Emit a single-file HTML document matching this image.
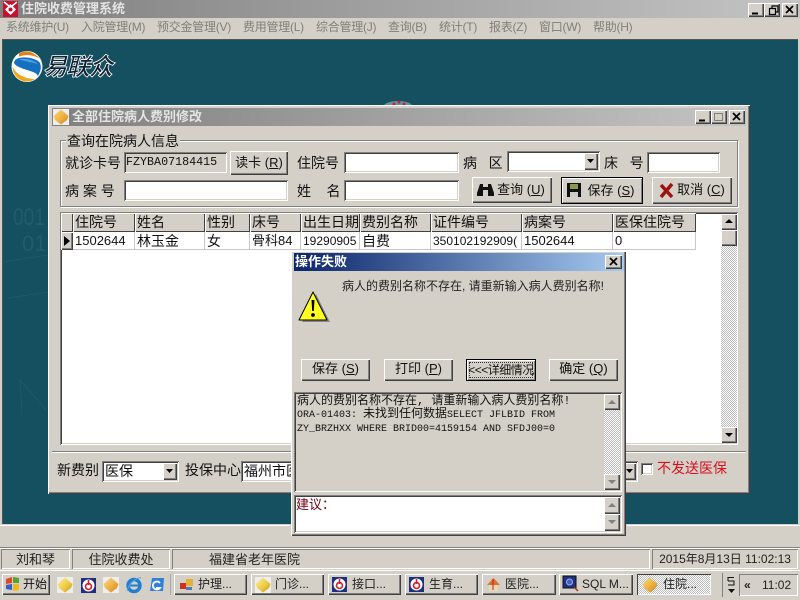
<!DOCTYPE html>
<html><head><meta charset="utf-8">
<style>
html,body{margin:0;padding:0;width:800px;height:600px;overflow:hidden;background:#d4d0c8}
body{position:relative;font-family:"Liberation Sans","WenQuanYi Zen Hei","Noto Sans CJK SC",sans-serif;font-size:14px;color:#111}
div,span{position:absolute;box-sizing:border-box;white-space:nowrap}
.r{background:#d4d0c8;box-shadow:inset 1px 1px 0 #fff,inset -1px -1px 0 #404040,inset -2px -2px 0 #808080,inset 2px 2px 0 #d4d0c8;text-align:center}
.bk{background:#d4d0c8;border:1px solid #000;box-shadow:inset 1px 1px 0 #fff,inset -1px -1px 0 #808080;text-align:center}
.s{background:#fff;box-shadow:inset 1px 1px 0 #808080,inset -1px -1px 0 #fff,inset 2px 2px 0 #404040,inset -2px -2px 0 #d4d0c8}
.p{box-shadow:inset 1px 1px 0 #808080,inset -1px -1px 0 #fff;text-align:center;font-size:13px;line-height:21px;color:#222}
.t{line-height:16px}
.m{font-size:12px;color:#807f7b;top:20px;line-height:15px;letter-spacing:-.25px}
.h{background:#d4d0c8;box-shadow:inset 1px 1px 0 #fff,inset -1px -1px 0 #404040;top:213px;height:19px;line-height:18px;padding-left:2px;font-size:14px;overflow:hidden}
.c{top:232px;height:18px;line-height:18px;padding-left:2px;font-size:13px;background:#fff;border-right:1px solid #c8c8c8;border-bottom:1px solid #c8c8c8;overflow:hidden}
.mono{font-family:"Liberation Mono","WenQuanYi Zen Hei",monospace}
.tb{top:574px;height:21px;line-height:20px;font-size:12px;text-align:left;padding-left:24px;color:#222}
.dither{background-image:linear-gradient(45deg,#bbb 25%,transparent 25%,transparent 75%,#bbb 75%),linear-gradient(45deg,#bbb 25%,#fff 25%,#fff 75%,#bbb 75%);background-size:2px 2px;background-position:0 0,1px 1px}
svg{position:absolute;overflow:visible}
</style></head><body>

<svg width="0" height="0" style="left:0;top:0"><defs>
<linearGradient id="g" x1="0" y1="0" x2="1" y2="1"><stop offset="0" stop-color="#f8dc80"/><stop offset=".55" stop-color="#eeb040"/><stop offset="1" stop-color="#c88020"/></linearGradient>
<linearGradient id="y" x1="0" y1="0" x2="1" y2="1"><stop offset="0" stop-color="#fff0a0"/><stop offset=".6" stop-color="#ecc840"/><stop offset="1" stop-color="#b89020"/></linearGradient>
</defs></svg>

<!-- main title -->
<div style="left:0;top:0;width:800px;height:18px;background:linear-gradient(90deg,#808080,#c4c4c4)"></div>
<svg style="left:3px;top:1px" width="15" height="16" viewBox="0 0 15 16"><rect width="15" height="16" fill="#c8102e"/><path d="M7.5 3 L13 8.5 L7.5 14 L2 8.5Z" fill="#fff"/><circle cx="7.5" cy="8.5" r="2" fill="#c8102e"/><path d="M1 1 L6 5 M14 1 L9 5" stroke="#fff" stroke-width="1.5"/></svg>
<div style="left:21px;top:1px;font-size:13px;font-weight:bold;color:#e4e4e4;line-height:16px">住院收费管理系统</div>
<div class="r" style="left:748px;top:3px;width:16px;height:14px"></div>
<div class="r" style="left:764px;top:3px;width:16px;height:14px"></div>
<div class="r" style="left:782px;top:3px;width:16px;height:14px"></div>
<svg style="left:748px;top:3px" width="50" height="14"><path d="M4 10.5h6" stroke="#000" stroke-width="2"/><path d="M21.5 5.5h6v6h-6zM24 5V3h6v6h-2" fill="none" stroke="#000" stroke-width="1.2"/><path d="M38 3l7 7M45 3l-7 7" stroke="#000" stroke-width="1.7"/></svg>

<!-- menu -->
<div style="left:0;top:18px;width:800px;height:20px;background:#d4d0c8"></div>
<span class="m" style="left:6px">系统维护(U)</span>
<span class="m" style="left:81px">入院管理(M)</span>
<span class="m" style="left:157px">预交金管理(V)</span>
<span class="m" style="left:243px">费用管理(L)</span>
<span class="m" style="left:316px">综合管理(J)</span>
<span class="m" style="left:388px">查询(B)</span>
<span class="m" style="left:439px">统计(T)</span>
<span class="m" style="left:489px">报表(Z)</span>
<span class="m" style="left:539px">窗口(W)</span>
<span class="m" style="left:593px">帮助(H)</span>

<!-- MDI -->
<div style="left:0;top:38px;width:800px;height:488px;background:#d4d0c8"></div>
<div style="left:2px;top:39px;width:796px;height:485px;background:#14505f;box-shadow:inset 1px 1px 0 #555"></div>
<div style="left:13px;top:205px;font-size:24px;color:#1f5d6c;font-family:'Liberation Sans';line-height:26px;transform:scaleX(.8);transform-origin:0 0">001</div>
<div style="left:22px;top:232px;font-size:22px;color:#1f5d6c;line-height:24px">01</div>
<svg style="left:0;top:250px" width="50" height="170"><path d="M2 12L48 5M8 48L48 42M20 130L22 165M20 130L46 160" stroke="#1c5a69" stroke-width="1" fill="none"/></svg>
<svg style="left:380px;top:98px" width="36" height="8"><ellipse cx="18" cy="8" rx="14" ry="5" fill="#6b9298"/><circle cx="14" cy="6" r="1.5" fill="#c02040"/><circle cx="19" cy="4" r="1.5" fill="#c02040"/><circle cx="24" cy="6" r="1.5" fill="#c02040"/></svg>

<!-- logo -->
<svg style="left:11px;top:50px" width="32" height="33" viewBox="0 0 32 33"><circle cx="16" cy="16.5" r="15.5" fill="#fff"/><path d="M7 7A14.5 14.5 0 0 1 29 9C22 4 13 4.500 7 7Z" fill="#e8801a"/><path d="M8 3.500A14 14 0 0 1 22 3L25 6C19 3.500 13 4 8 6Z" fill="#e8801a"/><path d="M1.500 17A14.500 14.500 0 0 0 24 29C18 29 7 27 1.500 17Z" fill="#f0a818"/><path d="M1.800 20C5 27 15 29 23 29A14 14 0 0 1 7 28Z" fill="#f0a818"/><path d="M3 13C3 10 6 8 11 7.500C18 7 26 9 29 13C31 18 29 22 27 26C25 20 7 20 3 13Z" fill="#1670c0"/><path d="M8 9C14 8 23 10 27 14C20 12 12 11 8 9Z" fill="#4aa4e8"/></svg>
<div style="left:43px;top:53px;font-size:24px;line-height:30px;font-style:italic;font-weight:bold;color:#123;-webkit-text-stroke:.8px #fff;letter-spacing:-1px">易联众</div>

<!-- child window -->
<div class="r" style="left:48px;top:105px;width:702px;height:389px"></div>
<div style="left:52px;top:108px;width:694px;height:18px;background:linear-gradient(90deg,#808080,#c4c4c4)"></div>
<svg style="left:53px;top:109px" width="16" height="16" viewBox="0 0 16 16"><rect width="16" height="16" fill="#eee"/><path d="M8 .5L15.500 7L14 11L8 15.500L2 11L.5 7Z" fill="url(#g)"/></svg>
<div style="left:72px;top:109px;font-size:13px;font-weight:bold;color:#e4e4e4;line-height:16px">全部住院病人费别修改</div>
<div class="r" style="left:695px;top:110px;width:16px;height:14px"></div>
<div class="r" style="left:711px;top:110px;width:16px;height:14px"></div>
<div class="r" style="left:729px;top:110px;width:16px;height:14px"></div>
<svg style="left:695px;top:110px" width="50" height="14"><path d="M4 10.5h6" stroke="#000" stroke-width="2"/><path d="M19.5 3.5h8v7h-8z" fill="none" stroke="#808080"/><path d="M38 3l7 7M45 3l-7 7" stroke="#000" stroke-width="1.7"/></svg>

<!-- group -->
<div style="left:60px;top:140px;width:678px;height:67px;border:1px solid #808080;box-shadow:1px 1px 0 #fff,inset 1px 1px 0 #fff"></div>
<div class="t" style="left:66px;top:133px;background:#d4d0c8;padding:0 1px">查询在院病人信息</div>
<div class="t" style="left:65px;top:155px">就诊卡号</div>
<div class="s mono" style="left:124px;top:152px;width:103px;height:21px;background:#d4d0c8;font-size:11.7px;line-height:21px;padding-left:2px">FZYBA07184415</div>
<div class="r" style="left:230px;top:151px;width:58px;height:24px;line-height:23px;font-size:13px">读卡 (<u>R</u>)</div>
<div class="t" style="left:297px;top:155px">住院号</div>
<div class="s" style="left:344px;top:152px;width:115px;height:21px"></div>
<div class="t" style="left:463px;top:155px">病&nbsp;&nbsp;&nbsp;区</div>
<div class="s" style="left:507px;top:151px;width:93px;height:21px"></div>
<div class="r" style="left:584px;top:153px;width:14px;height:17px"></div>
<svg style="left:587px;top:159px" width="8" height="5"><path d="M0 0h7L3.5 4Z" fill="#000"/></svg>
<div class="t" style="left:604px;top:155px">床&nbsp;&nbsp;&nbsp;号</div>
<div class="s" style="left:647px;top:152px;width:73px;height:21px"></div>
<div class="t" style="left:65px;top:183px">病&nbsp;案&nbsp;号</div>
<div class="s" style="left:124px;top:180px;width:164px;height:21px"></div>
<div class="t" style="left:297px;top:183px">姓&nbsp;&nbsp;&nbsp;&nbsp;名</div>
<div class="s" style="left:344px;top:180px;width:115px;height:21px"></div>
<div class="r" style="left:472px;top:177px;width:80px;height:26px;line-height:25px;font-size:13px;padding-left:18px">查询 (<u>U</u>)</div>
<svg style="left:477px;top:183px" width="17" height="14" viewBox="0 0 17 14"><path d="M3 1h3v3h5V1h3l3 9v3h-6V7H6v6H0v-3Z" fill="#111"/></svg>
<div class="bk" style="left:561px;top:177px;width:82px;height:27px;line-height:25px;font-size:13px;padding-left:18px">保存 (<u>S</u>)</div>
<svg style="left:567px;top:183px" width="14" height="14" viewBox="0 0 14 14"><path d="M0 0h14v14H0z" fill="#111"/><path d="M3 1h8v5H3z" fill="#8a9a50"/><path d="M3 9h8v5H3z" fill="#ccc"/></svg>
<div class="r" style="left:652px;top:177px;width:80px;height:27px;line-height:26px;font-size:13px;padding-left:18px">取消 (<u>C</u>)</div>
<svg style="left:659px;top:183px" width="15" height="15" viewBox="0 0 15 15"><path d="M2 2L13 14M13 1L2 14" stroke="#a01010" stroke-width="3.5"/></svg>

<!-- grid -->
<div class="s" style="left:60px;top:212px;width:678px;height:233px"></div>
<div class="h" style="left:61px;width:12px"></div>
<div class="h" style="left:73px;width:62px">住院号</div>
<div class="h" style="left:135px;width:70px">姓名</div>
<div class="h" style="left:205px;width:45px">性别</div>
<div class="h" style="left:250px;width:51px">床号</div>
<div class="h" style="left:301px;width:59px">出生日期</div>
<div class="h" style="left:360px;width:71px">费别名称</div>
<div class="h" style="left:431px;width:91px">证件编号</div>
<div class="h" style="left:522px;width:91px">病案号</div>
<div class="h" style="left:613px;width:83px">医保住院号</div>
<div class="r" style="left:61px;top:232px;width:12px;height:18px"></div>
<svg style="left:64px;top:236px" width="7" height="11"><path d="M0 0L6 5L0 10Z" fill="#000"/></svg>
<div class="c" style="left:73px;width:62px">1502644</div>
<div class="c" style="left:135px;width:70px;font-size:14px">林玉金</div>
<div class="c" style="left:205px;width:45px;font-size:14px">女</div>
<div class="c" style="left:250px;width:51px">骨科84</div>
<div class="c" style="left:301px;width:59px;font-size:12px">19290905</div>
<div class="c" style="left:360px;width:71px;font-size:14px">自费</div>
<div class="c" style="left:431px;width:91px;font-size:12px">350102192909(</div>
<div class="c" style="left:522px;width:91px">1502644</div>
<div class="c" style="left:613px;width:83px">0</div>
<div class="dither" style="left:721px;top:214px;width:16px;height:229px"></div>
<div class="r" style="left:721px;top:214px;width:16px;height:16px"></div>
<svg style="left:725px;top:219px" width="9" height="5"><path d="M4 0L8 4H0Z" fill="#000"/></svg>
<div class="r" style="left:721px;top:230px;width:16px;height:16px"></div>
<div class="r" style="left:721px;top:427px;width:16px;height:16px"></div>
<svg style="left:725px;top:433px" width="9" height="5"><path d="M0 0H8L4 4Z" fill="#000"/></svg>

<!-- bottom row -->
<div style="left:52px;top:451px;width:694px;height:2px;border-top:1px solid #808080;border-bottom:1px solid #fff"></div>
<div class="t" style="left:57px;top:462px">新费别</div>
<div class="s" style="left:102px;top:461px;width:77px;height:21px;line-height:21px;padding-left:3px">医保</div>
<div class="r" style="left:163px;top:463px;width:14px;height:17px"></div>
<svg style="left:166px;top:469px" width="8" height="5"><path d="M0 0h7L3.5 4Z" fill="#000"/></svg>
<div class="t" style="left:185px;top:462px">投保中心</div>
<div class="s" style="left:241px;top:461px;width:397px;height:21px;line-height:21px;padding-left:3px">福州市医保</div>
<div class="r" style="left:622px;top:463px;width:14px;height:17px"></div>
<svg style="left:626px;top:469px" width="8" height="5"><path d="M0 0h7L3.5 4Z" fill="#000"/></svg>
<div class="s" style="left:641px;top:463px;width:12px;height:12px"></div>
<div class="t" style="left:657px;top:460px;color:#d81020">不发送医保</div>

<!-- dialog -->
<div class="r" style="left:291px;top:251px;width:335px;height:285px"></div>
<div style="left:294px;top:253px;width:330px;height:18px;background:linear-gradient(90deg,#0a246a,#a6caf0)"></div>
<div style="left:295px;top:254px;font-size:13px;font-weight:bold;color:#fff;line-height:16px">操作失败</div>
<div class="r" style="left:605px;top:255px;width:17px;height:14px"></div>
<svg style="left:605px;top:255px" width="17" height="14"><path d="M5 3l7 7M12 3l-7 7" stroke="#000" stroke-width="1.7"/></svg>
<div style="left:342px;top:279px;font-size:12px;line-height:15px;color:#222">病人的费别名称不存在, 请重新输入病人费别名称!</div>
<svg style="left:297px;top:290px" width="36" height="34" viewBox="0 0 36 34"><path d="M3 30L17 2L31 30Z" fill="#888" transform="translate(2 2)"/><path d="M2 30L16 2L30 30Z" fill="#ffff20" stroke="#000" stroke-linejoin="round"/><path d="M14.5 10h3l-.7 11h-1.600z" fill="#000"/><circle cx="16" cy="25" r="1.900" fill="#000"/></svg>
<div class="r" style="left:301px;top:359px;width:69px;height:22px;line-height:20px;font-size:13px">保存 (<u>S</u>)</div>
<div class="r" style="left:384px;top:359px;width:69px;height:22px;line-height:20px;font-size:13px">打印 (<u>P</u>)</div>
<div class="bk" style="left:466px;top:359px;width:70px;height:22px;line-height:20px;font-size:12px;letter-spacing:-.5px">&lt;&lt;&lt;详细情况</div>
<div style="left:469px;top:362px;width:64px;height:16px;border:1px dotted #333"></div>
<div class="r" style="left:549px;top:359px;width:69px;height:22px;line-height:20px;font-size:13px">确定 (<u>Q</u>)</div>

<div class="s" style="left:294px;top:392px;width:328px;height:100px;background:#d4d0c8"></div>
<div class="mono" style="left:297px;top:395px;font-size:12px;line-height:12.5px;color:#111">病人的费别名称不存在, 请重新输入病人费别名称!<br><span style="position:static;font-size:10px">ORA-01403: </span>未找到任何数据<span style="position:static;font-size:10px">SELECT JFLBID FROM</span><br><span style="position:static;font-size:10px">ZY_BRZHXX WHERE BRID00=4159154 AND SFDJ00=0</span></div>
<div class="dither" style="left:604px;top:394px;width:16px;height:96px"></div>
<div class="r" style="left:604px;top:394px;width:16px;height:16px"></div>
<svg style="left:608px;top:400px" width="9" height="5"><path d="M4 0L8 4H0Z" fill="#808080"/></svg>
<div class="r" style="left:604px;top:474px;width:16px;height:16px"></div>
<svg style="left:608px;top:480px" width="9" height="5"><path d="M0 0H8L4 4Z" fill="#808080"/></svg>

<div class="s" style="left:294px;top:495px;width:328px;height:38px"></div>
<div style="left:296px;top:497px;font-size:13px;line-height:15px;color:#700010">建议：</div>
<div class="r" style="left:604px;top:497px;width:16px;height:17px"></div>
<svg style="left:608px;top:503px" width="9" height="5"><path d="M4 0L8 4H0Z" fill="#808080"/></svg>
<div class="r" style="left:604px;top:514px;width:16px;height:17px"></div>
<svg style="left:608px;top:520px" width="9" height="5"><path d="M0 0H8L4 4Z" fill="#808080"/></svg>

<!-- strip below MDI -->
<div style="left:0;top:525px;width:290px;height:1px;background:#fff"></div>
<div style="left:627px;top:525px;width:173px;height:1px;background:#fff"></div>
<div style="left:0;top:547px;width:800px;height:1px;background:#808080"></div>
<div style="left:0;top:548px;width:800px;height:1px;background:#fff"></div>

<!-- status -->
<div class="p" style="left:1px;top:549px;width:69px;height:20px">刘和琴</div>
<div class="p" style="left:72px;top:549px;width:98px;height:20px">住院收费处</div>
<div class="p" style="left:172px;top:549px;width:478px;height:20px;text-align:left;padding-left:37px">福建省老年医院</div>
<div class="p" style="left:652px;top:549px;width:146px;height:20px;font-size:12px">2015年8月13日 11:02:13</div>

<!-- taskbar -->
<div style="left:0;top:570px;width:800px;height:30px;background:#d4d0c8;border-top:1px solid #fff"></div>
<div class="r" style="left:2px;top:574px;width:48px;height:21px;line-height:20px;font-size:12px;text-align:left;padding-left:21px">开始</div>
<svg style="left:5px;top:576px" width="16" height="16" viewBox="0 0 16 16"><path d="M1 3l6-2v6l-6 1z" fill="#e04820"/><path d="M8 1l6 1v5l-6 0z" fill="#58a030"/><path d="M1 9l6-1v6l-6-1z" fill="#3060c8"/><path d="M8 8h6v6l-6 1z" fill="#f0b818"/></svg>
<svg style="left:57px;top:577px" width="16" height="16" viewBox="0 0 16 16"><rect width="16" height="16" fill="#eee"/><path d="M8 .5L15.500 7L14 11L8 15.500L2 11L.5 7Z" fill="url(#y)"/></svg>
<svg style="left:81px;top:578px" width="15" height="15" viewBox="0 0 15 15"><rect width="15" height="15" fill="#203080"/><circle cx="7.500" cy="7.500" r="6" fill="#fff"/><circle cx="7.500" cy="8.500" r="3" fill="none" stroke="#d02030" stroke-width="1.600"/><path d="M7.500 2v5" stroke="#d02030" stroke-width="1.600"/></svg>
<svg style="left:103px;top:577px" width="16" height="16" viewBox="0 0 16 16"><rect width="16" height="16" fill="#eee"/><path d="M8 .5L15.500 7L14 11L8 15.500L2 11L.5 7Z" fill="url(#g)"/></svg>
<svg style="left:126px;top:577px" width="16" height="16" viewBox="0 0 16 16"><circle cx="8" cy="8.500" r="6" fill="none" stroke="#2080d0" stroke-width="3.400"/><path d="M3 8.500h11" stroke="#2080d0" stroke-width="2"/><path d="M15 1C11 0 3 6 1 14" fill="none" stroke="#60a0e0"/></svg>
<svg style="left:149px;top:577px" width="16" height="16" viewBox="0 0 16 16"><path d="M3 1h12l-1 13H1z" fill="#3080d8"/><path d="M11 6A4 4 0 1 0 11 11H7" fill="none" stroke="#fff" stroke-width="1.800"/></svg>
<div style="left:170px;top:574px;width:1px;height:21px;background:#aaa"></div>

<div class="r tb" style="left:174px;width:73px">护理...</div>
<svg style="left:180px;top:579px" width="13" height="12"><rect x="0" y="4" width="6" height="6" fill="#d03020"/><rect x="6" y="0" width="7" height="7" fill="#e8b030"/><rect x="6" y="8" width="6" height="3" fill="#5078c8"/></svg>
<div class="r tb" style="left:251px;width:73px">门诊...</div>
<svg style="left:255px;top:577px" width="16" height="16" viewBox="0 0 16 16"><rect width="16" height="16" fill="#eee"/><path d="M8 .5L15.500 7L14 11L8 15.500L2 11L.5 7Z" fill="url(#y)"/></svg>
<div class="r tb" style="left:328px;width:73px">接口...</div>
<svg style="left:332px;top:577px" width="15" height="15" viewBox="0 0 15 15"><rect width="15" height="15" fill="#203080"/><circle cx="7.500" cy="7.500" r="6" fill="#fff"/><circle cx="7.500" cy="8.500" r="3" fill="none" stroke="#d02030" stroke-width="1.600"/><path d="M7.500 2v5" stroke="#d02030" stroke-width="1.600"/></svg>
<div class="r tb" style="left:405px;width:73px">生育...</div>
<svg style="left:409px;top:577px" width="15" height="15" viewBox="0 0 15 15"><rect width="15" height="15" fill="#203080"/><circle cx="7.500" cy="7.500" r="6" fill="#fff"/><circle cx="7.500" cy="8.500" r="3" fill="none" stroke="#d02030" stroke-width="1.600"/><path d="M7.500 2v5" stroke="#d02030" stroke-width="1.600"/></svg>
<div class="r tb" style="left:482px;width:74px;padding-left:23px">医院...</div>
<svg style="left:486px;top:577px" width="15" height="15" viewBox="0 0 15 15"><path d="M7.500 1L14 8H1Z" fill="#e07030"/><rect x="3" y="8" width="9" height="6" fill="#e8d8b0"/><path d="M7 2v11" stroke="#c02020"/></svg>
<div class="r tb" style="left:559px;width:74px;padding-left:23px">SQL M...</div>
<svg style="left:563px;top:576px" width="16" height="16" viewBox="0 0 16 16"><rect width="13" height="12" fill="#203080" stroke="#111"/><circle cx="6.500" cy="6" r="3" fill="#4060c0" stroke="#a0b0e0"/><path d="M11 11l4 4" stroke="#a03020" stroke-width="1.500"/></svg>
<div class="dither" style="left:637px;top:574px;width:74px;height:21px;box-shadow:inset 1px 1px 0 #404040,inset -1px -1px 0 #fff"></div>
<div style="left:663px;top:574px;height:21px;line-height:21px;font-size:12px;color:#222">住院...</div>
<svg style="left:642px;top:577px" width="16" height="16" viewBox="0 0 16 16"><path d="M8 .5L15.500 7L14 11L8 15.500L2 11L.5 7Z" fill="url(#g)"/></svg>
<div style="left:722px;top:573px;width:1px;height:24px;background:#808080"></div>
<svg style="left:727px;top:576px" width="9" height="18"><path d="M1 5V1.500H7M1 5H7V9H1" fill="none" stroke="#111"/><path d="M1 13H8L4.500 17Z" fill="#111"/></svg>
<div class="p" style="left:739px;top:574px;width:59px;height:22px;font-size:12px;line-height:22px;text-align:left;padding-left:5px"><b style="letter-spacing:-1px">&laquo;</b></div>
<div style="left:762px;top:574px;font-size:12px;line-height:22px;color:#222">11:02</div>
</body></html>
